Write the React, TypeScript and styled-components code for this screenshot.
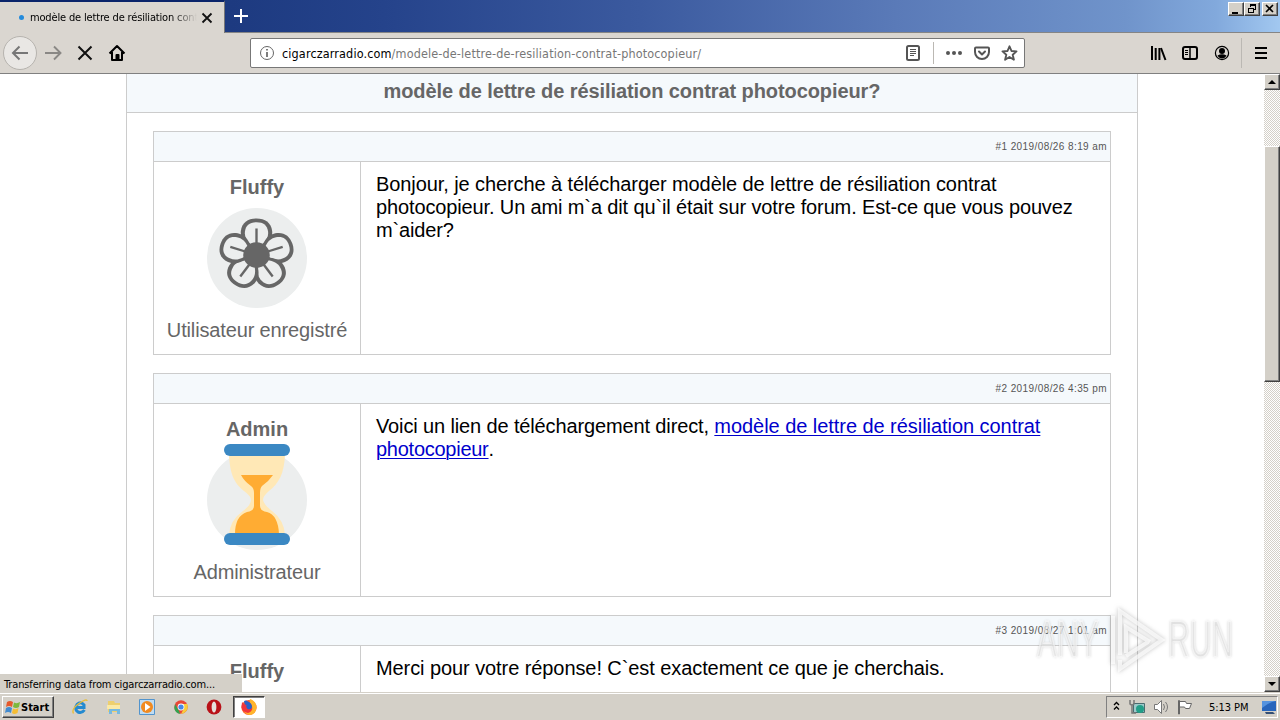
import React from 'react';
import styled, { createGlobalStyle, css } from 'styled-components';

const GlobalStyle = createGlobalStyle`
  * { box-sizing: border-box; }
  body { margin: 0; background: #fff; overflow: hidden; }
`;

const UI_FONT = '"DejaVu Sans Condensed", "DejaVu Sans", sans-serif';
const PAGE_FONT = '"Liberation Sans", Arial, sans-serif';

const Screen = styled.div`
  display: flex;
  flex-direction: column;
  width: 1280px;
  height: 720px;
  overflow: hidden;
  position: relative;
  font-family: ${UI_FONT};
  font-stretch: condensed;
  font-size: 11px;
  color: #000;
`;

const raised = css`
  background: #d4d0c8;
  border: 1px solid;
  border-color: #fff #404040 #404040 #fff;
  box-shadow: inset -1px -1px 0 #808080;
`;

/* spacing is the tracking that brings a line to its hinted width */
const Line = styled.span<{ spacing?: number }>`
  display: block;
  white-space: nowrap;
  letter-spacing: ${p => p.spacing || 0}px;
`;

const Icon = styled.svg<{ gap?: number }>`
  display: block;
  flex: none;
  margin-left: ${p => p.gap || 0}px;
`;

const TitleBar = styled.div`
  display: flex;
  height: 33px;
  flex: none;
  border-bottom: 1px solid #858585;
  background: linear-gradient(90deg, #0d2670 0%, #1d3a80 18%, #25438b 30%, #3b5a9f 50%, #5a7ab8 70%, #7094cb 88%, #82a9dc 95%, #a2c8f0 100%);
`;

const Tab = styled.div`
  display: flex;
  align-items: center;
  width: 225px;
  height: 33px;
  padding: 0 10px 0 19px;
  border-top: 2px solid #0a246a;
  border-right: 1px solid #777;
  background: #dad6d0;
`;

const Dot = styled.i`
  width: 5px;
  height: 5px;
  border-radius: 50%;
  background: #258bdc;
  margin-right: 6px;
`;

const TabTitle = styled.div`
  width: 167px;
  overflow: hidden;
  margin-right: 4px;
  mask-image: linear-gradient(90deg, #000 85%, transparent);
`;

const NewTab = styled.div`
  padding: 8px 0 0 8px;
  flex: 1;
`;

const WindowButtons = styled.div`
  display: flex;
  padding: 2px 2px 0 0;
`;

const WindowButton = styled.div<{ gap?: boolean }>`
  ${raised}
  width: 16px;
  height: 14px;
  margin-left: ${p => p.gap ? 2 : 0}px;
`;

const Toolbar = styled.div`
  display: flex;
  align-items: center;
  height: 41px;
  flex: none;
  background: #dad6d0;
  border-bottom: 1px solid #808080;
`;

const NavButtons = styled.div`
  display: flex;
  align-items: center;
  width: 250px;
  padding-left: 3px;
`;

const BackButton = styled.div`
  display: grid;
  place-items: center;
  width: 34px;
  height: 34px;
  border: 1px solid #b6b3ae;
  border-radius: 50%;
  background: #e9e7e4;
  margin-right: 8px;
`;

const UrlBar = styled.div`
  display: flex;
  align-items: center;
  width: 775px;
  height: 30px;
  padding-left: 8px;
  background: #fff;
  border: 1px solid #777;
  border-radius: 2px;
  font-size: 12.5px;
`;

const Url = styled.div`
  flex: 1;
  padding-left: 7px;
  color: #777;
  b { font-weight: normal; color: #000; }
`;

const UrlActions = styled.div`
  display: flex;
  align-items: center;
  padding-right: 6px;
`;

const Divider = styled.i<{ h: number; l: number; r: number }>`
  width: 1px;
  height: ${p => p.h}px;
  margin: 0 ${p => p.r}px 0 ${p => p.l}px;
  background: #bbb8b3;
`;

const RightTools = styled.div`
  display: flex;
  align-items: center;
  padding-left: 125px;
`;

const Viewport = styled.div`
  display: flex;
  height: 618px;
  flex: none;
  position: relative;
`;

const Page = styled.div`
  flex: 1;
  overflow: hidden;
  padding-left: 126px;
  background: #fff;
  font-family: ${PAGE_FONT};
  font-stretch: normal;
`;

const Forum = styled.div`
  width: 1012px;
  height: 640px;
  border: 1px solid #ccc;
  border-top: 0;
`;

const Topic = styled.div`
  display: flex;
  justify-content: center;
  height: 39px;
  padding-top: 6px;
  background: #f5f9fc;
  border-bottom: 1px solid #ccc;
  color: #666;
  font-size: 20px;
  line-height: 23px;
  font-weight: bold;
`;

const Posts = styled.div`
  display: flex;
  flex-direction: column;
  gap: 18px;
  padding: 18px 26px;
`;

const PostBox = styled.div`
  height: 224px;
  flex: none;
  border: 1px solid #ccc;
`;

const PostHead = styled.div`
  display: flex;
  justify-content: flex-end;
  height: 30px;
  padding: 8px 3px 0 0;
  background: #f5f9fc;
  border-bottom: 1px solid #ccc;
  color: #555;
  font-size: 10px;
  line-height: 13px;
`;

const PostBody = styled.div`
  display: flex;
  height: 192px;
`;

const Author = styled.div`
  display: flex;
  flex-direction: column;
  align-items: center;
  width: 207px;
  padding-top: 14px;
  border-right: 1px solid #ccc;
  color: #666;
  font-size: 20px;
  line-height: 23px;
`;

const Avatar = styled.svg`
  display: block;
  flex: none;
  margin: 9px 0 11px;
  overflow: visible;
`;

const Message = styled.div`
  padding: 11px 0 0 15px;
  font-size: 20px;
  line-height: 23px;
`;

const Link = styled.span<{ spacing: number }>`
  color: #0000cc;
  letter-spacing: ${p => p.spacing}px;
  text-decoration: underline;
  text-decoration-thickness: 1px;
  text-underline-offset: 2px;
`;

const ScrollBar = styled.div`
  display: flex;
  flex-direction: column;
  width: 16px;
  background: repeating-conic-gradient(#fff 0 25%, #d4d0c8 0 50%) 0 0 / 2px 2px;
`;

const ScrollButton = styled.div`
  ${raised}
  display: grid;
  place-items: center;
  height: 16px;
`;

const Thumb = styled.div`
  ${raised}
  height: 236px;
  margin: 56px 0 294px;
`;

const Status = styled.div`
  position: absolute;
  left: 0;
  bottom: 0;
  width: 242px;
  height: 18px;
  padding: 4px 0 0 4px;
  background: #d4d0c8;
  line-height: 14px;
`;

const TaskBar = styled.div`
  display: flex;
  align-items: center;
  height: 28px;
  flex: none;
  padding-top: 1px;
  background: #d4d0c8;
  border-top: 1px solid #d4d0c8;
  box-shadow: inset 0 1px 0 #fff;
`;

const Start = styled.div`
  ${raised}
  display: flex;
  align-items: center;
  width: 52px;
  height: 22px;
  margin-left: 2px;
  padding-left: 1px;
  font-weight: bold;
`;

const QuickLaunch = styled.div`
  display: flex;
  align-items: center;
  gap: 17.5px;
  padding-left: 18px;
  flex: 1;
`;

const ActiveTask = styled.div`
  display: grid;
  place-items: center;
  width: 32px;
  height: 22px;
  margin-left: -7px;
  background: #fff;
  border: 1px solid;
  border-color: #404040 #fff #fff #404040;
  box-shadow: inset 1px 1px 0 #808080;
`;

const Tray = styled.div`
  display: flex;
  align-items: center;
  width: 172px;
  height: 22px;
  margin-right: 2px;
  padding-left: 6px;
  border: 1px solid;
  border-color: #808080 #fff #fff #808080;
`;

const Clock = styled.div`
  width: 52px;
  margin-left: 15px;
`;

const Watermark = styled.div`
  position: absolute;
  left: 1037px;
  top: 606px;
  display: flex;
  align-items: center;
  font-family: ${PAGE_FONT};
  font-stretch: normal;
  font-size: 51px;
  line-height: 68px;
  color: rgba(255, 255, 255, 0.55);
  text-shadow: 0 0 3px rgba(90, 90, 90, 0.45);
`;

const WatermarkPlay = styled.svg`
  display: block;
  flex: none;
  filter: drop-shadow(0 0 2px rgba(90, 90, 90, 0.5));
`;

const WatermarkWord = styled.div<{ w: number }>`
  width: ${p => p.w}px;
  white-space: nowrap;
  span {
    display: inline-block;
    transform: scaleX(0.59);
    transform-origin: 0 50%;
    -webkit-text-stroke: 2px rgba(255, 255, 255, 0.5);
  }
`;

/* the petals sit slightly wider than tall */
const Flower = () => (
  <Avatar width="100" height="100" viewBox="0 0 100 100">
    <circle cx="50" cy="50" r="50" fill="#eceeee" />
    <g transform="translate(49.5 47) scale(1.08 1.04) translate(-49.5 -47)">
      {[0, 72, 144, 216, 288].map(a => (
        <g key={a} transform={`rotate(${a} 49.5 47)`}>
          <path d="M44 40C37 35 34.500 30 35 24C36 16 41.500 12 49.500 12S63 16 64 24C64.500 30 62 35 55 40Z" fill="#666" />
          <path d="M44.500 37C40 33 38.300 29 38.800 24.500C39.500 18.500 43 15.500 49.500 15.500S59.500 18.500 60.200 24.500C60.700 29 59 33 54.500 37Z" fill="#eceeee" />
          <path d="M49.500 36V21.500" stroke="#666" strokeWidth="2.200" />
        </g>
      ))}
      <circle cx="49.500" cy="47" r="12.300" fill="#666" />
    </g>
  </Avatar>
);

const Hourglass = () => (
  <Avatar width="100" height="100" viewBox="0 0 100 100">
    <circle cx="50" cy="50" r="50" fill="#eceeee" />
    <path d="M22 5H78C77 24 72 33 62 41Q56 46 56 50Q57 55 65 61Q77 70 78 85H22Q23 70 36 61Q44 55 44 50Q44 46 37 41C27 33 23 24 22 5Z" fill="#ffe8b6" />
    <path d="M34 25H66Q62 31 55 36Q53 38 53 43V56Q53 61 60 62Q71 65 72 84H28Q28 66 40 62Q47 61 47 56V43Q47 38 44 36Q37 31 34 25Z" fill="#ffac33" />
    <rect x="17" y="-6" width="66" height="12" rx="6" fill="#3b88c3" />
    <rect x="17" y="83" width="66" height="12" rx="6" fill="#3b88c3" />
  </Avatar>
);

const Firefox = () => (
  <Icon width="18" height="18" viewBox="0 0 18 18">
    <circle cx="9" cy="9.500" r="7.600" fill="#ff5a2b" />
    <path d="M10 1C14 2 17 6 16.500 10Q16 16 10 17Q5 16 4 13Q9 15 12 12Q13 9 11 6Q9 4 10 1Z" fill="#ffb52c" />
    <path d="M4 3Q6 2 8 3.500Q12 5 12 9Q11 13 7.500 12Q5 11 5 8Z" fill="#2962c9" />
    <path d="M2 4Q3.500 6.500 6.500 7Q5.500 9 7.500 11Q10 12 12 10Q12 14 8 15Q2 14 1.500 9Z" fill="#f0353d" />
  </Icon>
);

type Post = {
  id: string;
  date: string;
  author: string;
  role: string;
  avatar: React.ReactNode;
  lines: React.ReactNode;
};

const POSTS: Post[] = [
  {
    id: '1', date: '#1 2019/08/26 8:19 am', author: 'Fluffy', role: 'Utilisateur enregistré', avatar: <Flower />,
    lines: <>
      <Line spacing={-0.09}>Bonjour, je cherche à télécharger modèle de lettre de résiliation contrat</Line>
      <Line spacing={-0.13}>photocopieur. Un ami m`a dit qu`il était sur votre forum. Est-ce que vous pouvez</Line>
      <Line spacing={-0.15}>m`aider?</Line>
    </>,
  },
  {
    id: '2', date: '#2 2019/08/26 4:35 pm', author: 'Admin', role: 'Administrateur', avatar: <Hourglass />,
    lines: <>
      <Line spacing={-0.13}>Voici un lien de téléchargement direct, <Link spacing={-0.05}>modèle de lettre de résiliation contrat</Link></Line>
      <Line spacing={-0.1}><Link spacing={-0.26}>photocopieur</Link>.</Line>
    </>,
  },
  {
    id: '3', date: '#3 2019/08/27 1:01 am', author: 'Fluffy', role: 'Utilisateur enregistré', avatar: <Flower />,
    lines: <Line spacing={-0.08}>Merci pour votre réponse! C`est exactement ce que je cherchais.</Line>,
  },
];

function PostItem({ post }: { post: Post }) {
  return (
    <PostBox>
      <PostHead><Line spacing={0.41}>{post.date}</Line></PostHead>
      <PostBody>
        <Author>
          <strong>{post.author}</strong>
          {post.avatar}
          <Line spacing={-0.14}>{post.role}</Line>
        </Author>
        <Message>{post.lines}</Message>
      </PostBody>
    </PostBox>
  );
}

function Browser() {
  return (
    <>
      <TitleBar>
        <Tab>
          <Dot />
          <TabTitle><Line spacing={-0.16}>modèle de lettre de résiliation contrat</Line></TabTitle>
          <Icon width="12" height="12" stroke="#111" strokeWidth="1.8"><path d="M1.5 1.5l9 9M10.5 1.5l-9 9" /></Icon>
        </Tab>
        <NewTab><Icon width="16" height="16" stroke="#fff" strokeWidth="2"><path d="M8 1v14M1 8h14" /></Icon></NewTab>
        <WindowButtons>
          <WindowButton><Icon width="14" height="12"><path d="M3 9h6v2H3z" /></Icon></WindowButton>
          <WindowButton>
            <Icon width="14" height="12" fill="none" stroke="#000" shapeRendering="crispEdges">
              <path d="M5.500 4V1.500h5v5H9M5 2h6M3.500 5.500h5v4h-5zM3 5h6" />
            </Icon>
          </WindowButton>
          <WindowButton gap><Icon width="14" height="12" stroke="#000" strokeWidth="1.600"><path d="M3 2l7 7M10 2L3 9" /></Icon></WindowButton>
        </WindowButtons>
      </TitleBar>
      <Toolbar>
        <NavButtons>
          <BackButton>
            <Icon width="18" height="18" fill="none" stroke="#777" strokeWidth="2"><path d="M17 9H2M8.500 2.500L2 9l6.500 6.500" /></Icon>
          </BackButton>
          <Icon width="17" height="18" fill="none" stroke="#8a8885" strokeWidth="1.900"><path d="M0 9h15M9 2.500L15.500 9 9 15.500" /></Icon>
          <Icon gap={15} width="16" height="16" stroke="#111" strokeWidth="2"><path d="M1.500 1.500l13 13M14.500 1.500l-13 13" /></Icon>
          <Icon gap={15} width="18" height="18" fill="none" stroke="#000" strokeWidth="2" strokeLinejoin="round">
            <path d="M1.500 9.500L9 2l7.500 7.500M4 8v8h10V8M8.500 16v-5h2v5" />
          </Icon>
        </NavButtons>
        <UrlBar>
          <Icon width="16" height="16" fill="none" stroke="#666"><circle cx="8" cy="8" r="6.500" /><path d="M8 7v5M8 4v1.600" strokeWidth="1.700" /></Icon>
          <Url><Line spacing={0.14}><b>cigarczarradio.com</b>/modele-de-lettre-de-resiliation-contrat-photocopieur/</Line></Url>
          <UrlActions>
            <Icon width="16" height="16" fill="none" stroke="#555"><rect x="2" y="1" width="12" height="14" rx="1.500" strokeWidth="2" /><path d="M5 4.500h6M5 6.500h6M5 8.500h6M5 10.500h4" /></Icon>
            <Divider h={22} l={12} r={12} />
            <Icon width="16" height="16" fill="#555"><circle cx="2" cy="8" r="2" /><circle cx="8" cy="8" r="2" /><circle cx="14" cy="8" r="2" /></Icon>
            <Icon gap={12} width="16" height="16" fill="none" stroke="#555" strokeWidth="2" strokeLinecap="round" strokeLinejoin="round">
              <path d="M2 2.500h12q1 0 1 1V7a7 7 0 0 1-14 0V3.500q0-1 1-1zM5 6.500l3 3 3-3" />
            </Icon>
            <Icon gap={11} width="17" height="16" fill="none" stroke="#555" strokeWidth="1.900" strokeLinejoin="round">
              <path d="M8.500 1.300l2 4.700 5 .4-3.800 3.300 1.200 5-4.400-2.700-4.400 2.700 1.200-5L1.500 6.400l5-.4z" />
            </Icon>
          </UrlActions>
        </UrlBar>
        <RightTools>
          <Icon width="17" height="16" stroke="#000" strokeWidth="2"><path d="M2 1v14M5.700 3v12M9.400 3v12" /><path d="M11 3l4.500 12" /></Icon>
          <Icon gap={15} width="16" height="16" fill="none" stroke="#000"><rect x="1" y="2" width="14" height="12" rx="2" strokeWidth="2" /><path d="M8 2v12" strokeWidth="1.500" /><path d="M3 5.500h3M3 7.500h3M3 9.500h3" /></Icon>
          <Icon gap={16} width="16" height="16"><circle cx="8" cy="8" r="6.600" fill="none" stroke="#000" strokeWidth="1.200" /><circle cx="8" cy="6" r="3" /><path d="M3.500 10.500Q8 8 12.500 10.500Q11 13.500 8 13.500T3.500 10.500z" /></Icon>
          <Divider h={30} l={11} r={13} />
          <Icon width="12" height="14" stroke="#000" strokeWidth="2"><path d="M0 2h12M0 7h12M0 12h12" /></Icon>
        </RightTools>
      </Toolbar>
    </>
  );
}

function Task() {
  return (
    <TaskBar>
      <Start>
        <Icon width="17" height="17" viewBox="0 0 17 17">
          <path d="M3 3Q6 1 9 3L8 8Q5 6 2 8z" fill="#e6592b" /><path d="M10 3.500Q13 5 16 3L15 8Q12 10 9 8z" fill="#7db83b" />
          <path d="M2 9Q5 7 8 9L7 14Q4 12 1 14z" fill="#428bd0" /><path d="M9 9.500Q12 11 14.500 9L13.500 14Q10 16 8 14z" fill="#f5bd34" />
        </Icon>
        <Line>Start</Line>
      </Start>
      <QuickLaunch>
        <Icon width="16" height="16" fill="none"><path d="M12.500 11Q10 14.500 6 13Q2 10 5 5.500Q9 2 12 6V8.500H5" stroke="#248ad0" strokeWidth="3" /><path d="M1.500 14.500Q-1 10 7 4.500T15 2" stroke="#e9bd37" strokeWidth="1.400" /></Icon>
        <Icon width="16" height="16"><path d="M2 2h6l1 2h5v9H2z" fill="#edcf6e" /><path d="M1 6h13v4H1z" fill="#fae9a7" /><path d="M3 10h11v5h-3v-3H6v3H3z" fill="#77b9df" /></Icon>
        <Icon width="16" height="16"><path d="M.5.500h15v15H.5z" fill="#c0dcf2" stroke="#5294cd" /><circle cx="8" cy="8" r="6" fill="#f18a20" /><path d="M6 4l5.500 4L6 12z" fill="#fff" /></Icon>
        <Icon width="16" height="16"><circle cx="8" cy="8" r="6.700" fill="#e84737" /><path d="M2 5l4 7 1 3Q2 14 1.300 9z" fill="#32a350" /><path d="M9 5h5.500Q16 13 8 15l3-6z" fill="#f9cd3a" /><circle cx="8" cy="8" r="3.400" fill="#fff" /><circle cx="8" cy="8" r="2.600" fill="#4887e8" /></Icon>
        <Icon width="16" height="16"><circle cx="8" cy="8" r="7.400" fill="#b91118" /><ellipse cx="8" cy="8" rx="2.400" ry="5.600" fill="#e6e0dc" /></Icon>
        <ActiveTask><Firefox /></ActiveTask>
      </QuickLaunch>
      <Tray>
        <Icon width="7" height="12" fill="none" stroke="#000" strokeWidth="1.300"><path d="M1 4l2.500-2.500L6 4M1 8.500L3.500 6 6 8.500" /></Icon>
        <Icon gap={9} width="17" height="16"><path d="M4.500 4.500h11v9h-11z" fill="#9bc9c9" stroke="#4a6c70" /><path d="M1 1v4q2 2 4 0V1M3 6v8h4" fill="none" stroke="#777" strokeWidth="1.500" /><circle cx="11" cy="10" r="4" fill="#229e88" /></Icon>
        <Icon gap={7} width="17" height="16" fill="none" stroke="#777"><path d="M1.500 5.500h3l4-4v13l-4-4h-3z" fill="#fff" /><path d="M10.500 5q2 3 0 6M12.500 3q4 5 0 10" /></Icon>
        <Icon gap={7} width="17" height="16" fill="#fff" stroke="#666"><path d="M1.500 15V1.500h1V15zM2.500 2.500h6l1 2h5l-2 5h-4l-1-1.500h-5z" /></Icon>
        <Clock><Line spacing={-0.05}>5:13 PM</Line></Clock>
        <Icon width="16" height="16"><path d="M1 2h14v10H1z" fill="#2765bc" /><path d="M1 2h14Q8 3 1 9z" fill="#5593df" /><path d="M4 13h8l2 2H5z" fill="#344f75" /></Icon>
      </Tray>
    </TaskBar>
  );
}

export default function App() {
  return (
    <Screen>
      <GlobalStyle />
      <Browser />
      <Viewport>
        <Page>
          <Forum>
            <Topic><Line spacing={-0.08}>modèle de lettre de résiliation contrat photocopieur?</Line></Topic>
            <Posts>{POSTS.map(post => <PostItem key={post.id} post={post} />)}</Posts>
          </Forum>
        </Page>
        <ScrollBar>
          <ScrollButton><Icon width="8" height="4"><path d="M4 0l4 4H0z" /></Icon></ScrollButton>
          <Thumb />
          <ScrollButton><Icon width="8" height="4"><path d="M0 0h8L4 4z" /></Icon></ScrollButton>
        </ScrollBar>
        <Status><Line spacing={-0.14}>Transferring data from cigarczarradio.com...</Line></Status>
      </Viewport>
      <Task />
      <Watermark>
        <WatermarkWord w={72}><span>ANY</span></WatermarkWord>
        <WatermarkPlay width="59" height="68" fill="none" stroke="#fff" strokeOpacity="0.7" strokeWidth="4">
          <path d="M11 49V5L53 34 11 63V54M4 10v48M17 47V21l24 15M17 50l22-14" />
        </WatermarkPlay>
        <WatermarkWord w={72}><span>RUN</span></WatermarkWord>
      </Watermark>
    </Screen>
  );
}
